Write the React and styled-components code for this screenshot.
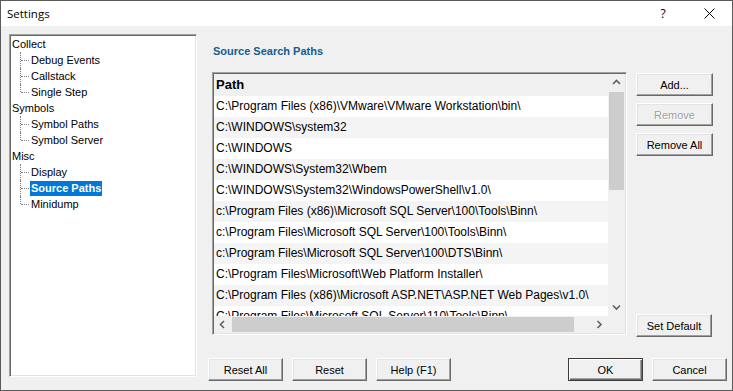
import React from 'react';
import styled, { createGlobalStyle, css } from 'styled-components';

const GlobalStyle = createGlobalStyle`
  html, body {
    margin: 0;
    padding: 0;
    background: #f0f0f0;
  }
  body {
    font-family: "Liberation Sans", Arial, sans-serif;
    color: #000;
  }
  * {
    box-sizing: border-box;
  }
`;

const tree = [
  { label: 'Collect', children: ['Debug Events', 'Callstack', 'Single Step'] },
  { label: 'Symbols', children: ['Symbol Paths', 'Symbol Server'] },
  { label: 'Misc', children: ['Display', 'Source Paths', 'Minidump'] },
];

const paths = [
  'C:\\Program Files (x86)\\VMware\\VMware Workstation\\bin\\',
  'C:\\WINDOWS\\system32',
  'C:\\WINDOWS',
  'C:\\WINDOWS\\System32\\Wbem',
  'C:\\WINDOWS\\System32\\WindowsPowerShell\\v1.0\\',
  'c:\\Program Files (x86)\\Microsoft SQL Server\\100\\Tools\\Binn\\',
  'c:\\Program Files\\Microsoft SQL Server\\100\\Tools\\Binn\\',
  'c:\\Program Files\\Microsoft SQL Server\\100\\DTS\\Binn\\',
  'C:\\Program Files\\Microsoft\\Web Platform Installer\\',
  'C:\\Program Files (x86)\\Microsoft ASP.NET\\ASP.NET Web Pages\\v1.0\\',
  'C:\\Program Files\\Microsoft SQL Server\\110\\Tools\\Binn\\',
];

const Chevron = ({ dir }) => {
  const pts = {
    up: '1,5 4.5,1.5 8,5',
    down: '1,1.5 4.5,5 8,1.5',
    left: '5,1 1.5,4.5 5,8',
    right: '1.5,1 5,4.5 1.5,8',
  }[dir];
  const vertical = dir === 'up' || dir === 'down';
  return (
    <svg width={vertical ? 9 : 7} height={vertical ? 7 : 9} viewBox={vertical ? '0 0 9 7' : '0 0 7 9'}>
      <polyline points={pts} fill="none" stroke="#606060" strokeWidth="1.6" />
    </svg>
  );
};

export default function App() {
  return (
    <>
      <GlobalStyle />
      <Window>
        <TitleBar>
          <Title>Settings</Title>
          <CaptionButton>?</CaptionButton>
          <CaptionButton>
            <svg width="11" height="11" viewBox="0 0 11 11">
              <path d="M0.5 0.5 L10.5 10.5 M10.5 0.5 L0.5 10.5" stroke="#000" strokeWidth="1" />
            </svg>
          </CaptionButton>
        </TitleBar>

        <Body>
          <TreePanel>
            {tree.map(group => (
              <div key={group.label}>
                <TreeRoot>{group.label}</TreeRoot>
                {group.children.map((child, i) => (
                  <TreeChild key={child} $last={i === group.children.length - 1}>
                    <TreeLabel $selected={child === 'Source Paths'}>{child}</TreeLabel>
                  </TreeChild>
                ))}
              </div>
            ))}
          </TreePanel>

          <RightColumn>
            <Heading>Source Search Paths</Heading>

            <MainRow>
              <ListBox>
                <ListContent>
                  <HeaderRow>Path</HeaderRow>
                  {paths.map((p, i) => (
                    <PathRow key={p} $striped={i % 2 === 1}>{p}</PathRow>
                  ))}
                </ListContent>

                <VScroll>
                  <ArrowBox><Chevron dir="up" /></ArrowBox>
                  <VTrack>
                    <VThumb />
                  </VTrack>
                  <ArrowBox><Chevron dir="down" /></ArrowBox>
                </VScroll>

                <HScroll>
                  <ArrowBox><Chevron dir="left" /></ArrowBox>
                  <HTrack>
                    <HThumb />
                  </HTrack>
                  <ArrowBox><Chevron dir="right" /></ArrowBox>
                </HScroll>

                <Corner />
              </ListBox>

              <SideButtons>
                <Button $w={77}>Add...</Button>
                <Button $w={77} disabled>Remove</Button>
                <Button $w={77}>Remove All</Button>
                <Spacer />
                <Button $w={76}>Set Default</Button>
              </SideButtons>
            </MainRow>

            <Footer>
              <Button>Reset All</Button>
              <Button>Reset</Button>
              <Button>Help (F1)</Button>
              <Spacer />
              <Button $default>OK</Button>
              <Button>Cancel</Button>
            </Footer>
          </RightColumn>
        </Body>
      </Window>
    </>
  );
}

// STYLED COMPONENTS
const Window = styled.div`
  width: 733px;
  height: 391px;
  border: 1px solid #5a5a5a;
  background: #f0f0f0;
  display: flex;
  flex-direction: column;
  overflow: hidden;
`;

const TitleBar = styled.div`
  height: 25px;
  flex: none;
  background: #fff;
  display: flex;
  align-items: center;
  padding-left: 6px;
`;

const Title = styled.div`
  flex: 1;
  font-size: 11.5px;
  font-family: "Open Sans", "Liberation Sans", sans-serif;
`;

const CaptionButton = styled.div`
  width: 46px;
  height: 25px;
  display: flex;
  align-items: center;
  justify-content: center;
  font-size: 12px;
  font-family: "Open Sans", "Liberation Sans", sans-serif;
`;

const Body = styled.div`
  flex: 1;
  display: flex;
  align-items: flex-start;
  padding: 8px 0 0 8px;
`;

const TreePanel = styled.div`
  width: 188px;
  height: 343px;
  flex: none;
  background: #fff;
  border: 1px solid;
  border-color: #a0a0a0 #fff #fff #a0a0a0;
  box-shadow: inset 1px 1px #696969, inset -1px -1px #e3e3e3;
  padding: 1px 0 0 1px;
  font-size: 11px;
  overflow: hidden;
`;

const TreeRoot = styled.div`
  height: 16px;
  line-height: 16px;
  padding-left: 1px;
  white-space: nowrap;
`;

const TreeChild = styled.div`
  position: relative;
  height: 16px;
  padding-left: 19px;
  white-space: nowrap;

  &::before {
    content: '';
    position: absolute;
    left: 9px;
    top: 0;
    height: ${p => (p.$last ? '8px' : '16px')};
    border-left: 1px dotted #808080;
  }

  &::after {
    content: '';
    position: absolute;
    left: 10px;
    top: 8px;
    width: 8px;
    border-top: 1px dotted #808080;
  }
`;

const TreeLabel = styled.span`
  display: inline-block;
  height: 16px;
  line-height: 16px;
  padding: 0 1px;

  ${p => p.$selected && css`
    background: #0078d7;
    color: #fff;
    font-weight: bold;
    height: 15px;
    line-height: 15px;
    margin-top: 1px;
  `}
`;

const RightColumn = styled.div`
  flex: 1;
  margin-left: 11px;
  margin-right: 5px;
  display: flex;
  flex-direction: column;
`;

const Heading = styled.div`
  margin: 9px 0 0 5px;
  height: 16px;
  line-height: 16px;
  font-size: 11px;
  font-weight: bold;
  color: #155d92;
`;

const MainRow = styled.div`
  display: flex;
  margin: 13px 0 0 4px;
  height: 265px;
`;

const ListBox = styled.div`
  width: 415px;
  height: 263px;
  border: 1px solid;
  border-color: #a0a0a0 #fff #fff #a0a0a0;
  box-shadow: inset 1px 1px #696969, inset -1px -1px #e3e3e3;
  padding: 1px;
  display: grid;
  grid-template-columns: 1fr 17px;
  grid-template-rows: 1fr 17px;
  background: #f0f0f0;
`;

const ListContent = styled.div`
  overflow: hidden;
  background: #fff;
  min-width: 0;
`;

const HeaderRow = styled.div`
  height: 22px;
  line-height: 22px;
  padding-left: 2px;
  font-size: 13px;
  font-weight: bold;
  background: #f0f0f0;
`;

const PathRow = styled.div`
  height: 21px;
  line-height: 21px;
  padding-left: 2px;
  font-size: 12px;
  white-space: nowrap;
  background: ${p => (p.$striped ? '#f4f4f4' : '#fff')};
`;

const VScroll = styled.div`
  display: flex;
  flex-direction: column;
  background: #f0f0f0;
`;

const ArrowBox = styled.div`
  width: 17px;
  height: 17px;
  flex: none;
  display: flex;
  align-items: center;
  justify-content: center;
`;

const VTrack = styled.div`
  flex: 1;
  padding: 1px 1px 0;
`;

const VThumb = styled.div`
  height: 98px;
  background: #cdcdcd;
`;

const HScroll = styled.div`
  display: flex;
  background: #f0f0f0;
`;

const HTrack = styled.div`
  flex: 1;
  padding: 1px 0 1px 1px;
`;

const HThumb = styled.div`
  width: 342px;
  height: 15px;
  background: #cdcdcd;
`;

const Corner = styled.div`
  background: #f0f0f0;
`;

const SideButtons = styled.div`
  margin-left: 9px;
  padding-top: 1px;
  display: flex;
  flex-direction: column;
  gap: 7px;
`;

const Spacer = styled.div`
  flex: 1;
`;

const Footer = styled.div`
  display: flex;
  gap: 9px;
  margin-top: 21px;
`;

const Button = styled.button`
  width: ${p => p.$w || 75}px;
  height: 23px;
  flex: none;
  padding: 0;
  font-family: "Liberation Sans", Arial, sans-serif;
  font-size: 11px;
  color: #000;
  background: #f0f0f0;
  border: 1px solid;
  border-color: #fff #696969 #696969 #fff;
  box-shadow: inset -1px -1px #a0a0a0, inset 1px 1px #e3e3e3;

  &:disabled {
    color: #a0a0a0;
    text-shadow: 1px 1px #fff;
  }

  ${p => p.$default && css`
    border-color: #3c3c3c;
    box-shadow: inset 1px 1px #fff, inset -1px -1px #696969, inset -2px -2px #a0a0a0;
  `}
`;
